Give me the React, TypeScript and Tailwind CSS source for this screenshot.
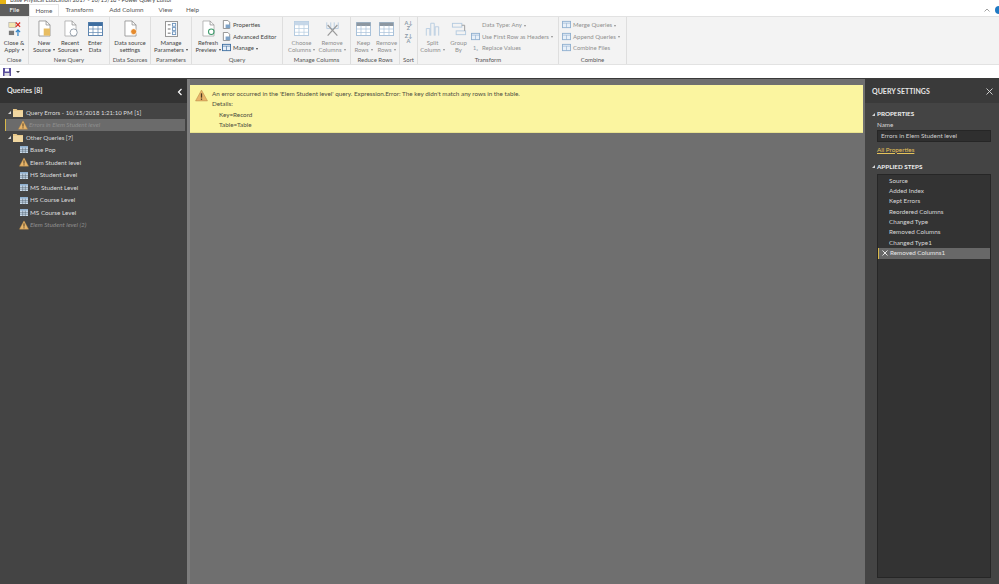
import React from "react";

const Doc = ({ badge, faded }: { badge?: React.ReactNode; faded?: boolean }) => (
  <svg width="19" height="19" viewBox="0 0 24 24" fill="none">
    <path d="M5 2.5h9l5 5v14H5z" fill="#fff" stroke={faded ? "#a9a9a9" : "#8d8d8d"} />
    <path d="M14 2.5v5h5" stroke="#8d8d8d" />
    {badge}
  </svg>
);

const Grid = ({ color = "#5f86b0", head = "#3e6ea0", w = 16, h = 16 }: { color?: string; head?: string; w?: number; h?: number }) => (
  <svg width={w} height={h} viewBox={`0 0 ${w} ${h}`} fill="none">
    <rect x="0.5" y="0.5" width={w - 1} height={h - 1} fill="#fff" stroke={color} />
    <rect x="0.5" y="0.5" width={w - 1} height={h / 4} fill={head} />
    <path d={`M${w / 3} ${h / 4}V${h}M${(2 * w) / 3} ${h / 4}V${h}M0 ${h / 2}H${w}M0 ${(3 * h) / 4}H${w}`} stroke={color} strokeWidth="0.7" />
  </svg>
);

const Caret = () => <span className="inline-block align-middle ml-[2px] w-0 h-0 border-x-[1.5px] border-x-transparent border-t-[2px] border-t-current" />;

const cap = (s: string) => (s.endsWith("▾") ? <>{s.slice(0, -2)}<Caret /></> : s);

const Btn = ({ icon, l1, l2, w, off }: { icon: React.ReactNode; l1: string; l2: string; w: number; off?: boolean }) => (
  <div className={`flex flex-col items-center shrink-0 ${off ? "text-[#8f8f8f]" : "text-[#444]"}`} style={{ width: w }}>
    <div className="h-[19px] flex items-center justify-center">{icon}</div>
    <div className="leading-[7px] h-[6.5px] mt-[1px] text-center whitespace-nowrap">{l1}</div>
    <div className="leading-[7px] h-[6.5px] text-center whitespace-nowrap">{cap(l2)}</div>
  </div>
);

const Group = ({ w, label, children }: { w: number; label: string; children: React.ReactNode }) => (
  <div className="flex flex-col h-full shrink-0 border-r border-[#dedede]" style={{ width: w }}>
    <div className="flex-1 flex items-start justify-center pt-[2px]">{children}</div>
    <div className="h-[8px] text-center text-[#555] leading-[7px] whitespace-nowrap">{label}</div>
  </div>
);

const Small = ({ icon, text, off }: { icon: React.ReactNode; text: string; off?: boolean }) => (
  <div className={`h-[11.6px] flex items-center gap-[2px] whitespace-nowrap ${off ? "text-[#8f8f8f]" : "text-[#444]"}`}>
    <span className="w-[9px] h-[10px] flex items-center justify-center shrink-0">{icon}</span>
    <span>{cap(text)}</span>
  </div>
);

const MiniIcon = ({ c = "#8fb0d0" }: { c?: string }) => (
  <svg width="9" height="9" viewBox="0 0 10 10" fill="none">
    <rect x="0.5" y="1.5" width="9" height="7" fill="#e8f0f8" stroke={c} />
    <path d="M0.5 3.5h9M5 3.5v5" stroke={c} strokeWidth="0.7" />
  </svg>
);

const Warn = ({ s = 11 }: { s?: number }) => (
  <svg width={s} height={s} viewBox="0 0 12 12">
    <path d="M6 1 11.5 11H.5z" fill="#e8b56a" stroke="#b98a45" strokeWidth="0.5" />
    <rect x="5.4" y="4" width="1.2" height="4" fill="#4a3a22" />
    <rect x="5.4" y="8.8" width="1.2" height="1.2" fill="#4a3a22" />
  </svg>
);

const Folder = () => (
  <svg width="10" height="9" viewBox="0 0 10 9">
    <path d="M0 1h3.5l1 1H10v7H0z" fill="#e9c98a" />
    <path d="M0 3h10v6H0z" fill="#f0d6a0" />
  </svg>
);

const TableSmall = () => (
  <svg width="8" height="7" viewBox="0 0 8 7">
    <rect width="8" height="7" fill="#c9dbec" />
    <rect width="8" height="1.6" fill="#8fb0d0" />
    <path d="M2.7 1.6V7M5.3 1.6V7M0 3.4h8M0 5.2h8" stroke="#4d5a68" strokeWidth="0.5" />
  </svg>
);

const Tri = () => <span className="w-0 h-0 border-l-[3px] border-l-transparent border-b-[3px] border-b-[#d5d5d5] shrink-0" />;

const Row = ({ kind, text, italic, selected }: { kind: "warn" | "table"; text: string; italic?: boolean; selected?: boolean }) => (
  <div className={`h-[12.55px] flex items-center whitespace-nowrap ${selected ? "bg-[#6b6b6b] border-l border-[#d8b84a] pl-[11px] mr-[2px] ml-[5px]" : "pl-[17px]"} ${italic ? "italic text-[#8e8e8e]" : "text-[#dcdcdc]"}`}>
    <span className={`w-[13px] flex justify-center shrink-0 ${selected ? "-ml-[1px]" : ""}`}>
      {kind === "warn" ? <Warn s={10} /> : <TableSmall />}
    </span>
    {text}
  </div>
);

const FolderRow = ({ text }: { text: string }) => (
  <div className="h-[12.55px] flex items-center gap-[2px] pl-[8px] text-[#dcdcdc] whitespace-nowrap text-[6.1px]">
    <Tri />
    <Folder />
    <span className="ml-[1px]">{text}</span>
  </div>
);

const steps = ["Source", "Added Index", "Kept Errors", "Reordered Columns", "Changed Type", "Removed Columns", "Changed Type1"];

export default function App() {
  return (
    <div className="w-[999px] h-[584px] overflow-hidden flex flex-col bg-white text-[6.3px]" style={{ fontFamily: 'Lato, "Open Sans", sans-serif' }}>
      {/* title bar, cropped */}
      <div className="h-[4px] overflow-hidden flex items-end gap-[4px] text-[#444] text-[5.8px] leading-[8px] shrink-0">
        <span className="w-[6px] h-[4px] bg-[#e7b416] shrink-0" />
        <span>Base Physical Education 2017 - 10/15/18 - Power Query Editor</span>
      </div>
      {/* tabs */}
      <div className="h-[12px] flex items-stretch text-[#555] shrink-0 overflow-hidden">
        <div className="w-[29px] bg-[#5e5e5e] text-white flex items-center justify-center">File</div>
        <div className="w-[30px] border-x border-t border-[#e5e5e5] flex items-center justify-center">Home</div>
        <div className="w-[41px] flex items-center justify-center">Transform</div>
        <div className="w-[51px] flex items-center justify-center ml-[1px]">Add Column</div>
        <div className="w-[27px] flex items-center justify-center">View</div>
        <div className="w-[27px] flex items-center justify-center">Help</div>
        <div className="flex-1 flex items-center justify-end gap-[5px] -mr-[4px]">
          <Chev />
          <span className="w-[8px] h-[8px] rounded-full bg-[#1f7ac4] shrink-0" />
        </div>
      </div>
      {/* ribbon */}
      <div className="h-[49px] bg-[#f3f3f3] border-y border-[#e2e2e2] flex shrink-0 text-[6px]">
        <Group w={29} label="Close">
          <Btn w={28} l1="Close &" l2="Apply ▾" icon={
            <svg width="13" height="16" viewBox="0 0 15 18" fill="none">
              <rect x="1" y="1.5" width="8" height="6" fill="#f4e7b0" stroke="#9c9c9c" strokeWidth="0.6" />
              <path d="M9 1.5l5 5M14 1.5l-5 5" stroke="#d93025" strokeWidth="1.4" />
              <rect x="1" y="11" width="6" height="5" fill="#777" />
              <path d="M11.5 17v-6.5M9 12.5l2.5-2.5 2.5 2.5" stroke="#2b7fc4" strokeWidth="1.3" />
            </svg>
          } />
        </Group>
        <Group w={81} label="New Query">
          <Btn w={26} l1="New" l2="Source ▾" icon={<Doc badge={<rect x="11" y="12" width="8" height="9" fill="#e8bd62" />} />} />
          <Btn w={26} l1="Recent" l2="Sources ▾" icon={<Doc faded badge={<circle cx="16" cy="17" r="4.5" fill="#fff" stroke="#7f8c99" />} />} />
          <Btn w={24} l1="Enter" l2="Data" icon={<Grid w={15} h={14} />} />
        </Group>
        <Group w={41} label="Data Sources">
          <Btn w={40} l1="Data source" l2="settings" icon={<Doc badge={<circle cx="16" cy="16" r="3.8" fill="#e58a2c" stroke="#fff" />} />} />
        </Group>
        <Group w={41} label="Parameters">
          <Btn w={40} l1="Manage" l2="Parameters ▾" icon={
            <svg width="13" height="16" viewBox="0 0 14 17" fill="none">
              <rect x="0.5" y="0.5" width="13" height="16" fill="#fff" stroke="#8d8d8d" />
              <path d="M3 4h3M3 8.5h3M3 13h3" stroke="#666" />
              <rect x="8" y="2.5" width="3.5" height="3" stroke="#6f95bd" />
              <rect x="8" y="7" width="3.5" height="3" stroke="#6f95bd" />
              <rect x="8" y="11.5" width="3.5" height="3" stroke="#6f95bd" />
            </svg>
          } />
        </Group>
        <Group w={91} label="Query">
          <div className="flex w-full pl-[3px]">
            <Btn w={26} l1="Refresh" l2="Preview ▾" icon={<Doc faded badge={<circle cx="15.5" cy="16" r="3.5" fill="none" stroke="#3c9a6a" strokeWidth="1.3" />} />} />
            <div className="ml-[1px] flex flex-col">
              <Small text="Properties" icon={<Doc2 />} />
              <Small text="Advanced Editor" icon={<Doc2 />} />
              <Small text="Manage ▾" icon={<MiniIcon c="#3e6ea0" />} />
            </div>
          </div>
        </Group>
        <Group w={68} label="Manage Columns">
          <Btn off w={31} l1="Choose" l2="Columns ▾" icon={<Grid w={15} h={15} color="#b5cbe0" head="#c6d7e8" />} />
          <Btn off w={30} l1="Remove" l2="Columns ▾" icon={
            <svg width="15" height="16" viewBox="0 0 17 17" fill="none">
              <path d="M2 1v7h13V1M6.5 1v7M10.5 1v7" stroke="#b5cbe0" />
              <path d="M3 4l11 12M14 4 3 16" stroke="#9a9a9a" strokeWidth="1.4" />
            </svg>
          } />
        </Group>
        <Group w={49} label="Reduce Rows">
          <Btn off w={23} l1="Keep" l2="Rows ▾" icon={<Grid w={15} h={14} color="#a9c2da" head="#8d97a1" />} />
          <Btn off w={23} l1="Remove" l2="Rows ▾" icon={<Grid w={15} h={14} color="#a9c2da" head="#8d97a1" />} />
        </Group>
        <Group w={18} label="Sort">
          <div className="h-[24px] flex flex-col items-center gap-[3px] pt-[2px] text-[#8a99a8] text-[5.5px] leading-[5px] font-bold">
            <span className="flex flex-col items-center"><span>A↓</span><span>Z</span></span>
            <span className="flex flex-col items-center"><span>Z↓</span><span>A</span></span>
          </div>
        </Group>
        <Group w={141} label="Transform">
          <div className="flex w-full pl-[1px]">
            <Btn off w={27} l1="Split" l2="Column ▾" icon={
              <svg width="15" height="16" viewBox="0 0 17 17" fill="none" stroke="#b5cbe0">
                <path d="M1.5 16V8h4v8M6.5 16V2h4v14M11.5 16V6h4v10" />
              </svg>
            } />
            <Btn off w={25} l1="Group" l2="By" icon={
              <svg width="16" height="16" viewBox="0 0 17 17" fill="none" stroke="#b5cbe0">
                <rect x="1.5" y="2.5" width="10" height="4" />
                <rect x="5.5" y="10.5" width="10" height="4" />
                <path d="M11.5 4.5h3v6" stroke="#9a9a9a" />
              </svg>
            } />
            <div className="flex flex-col">
              <Small off text="Data Type: Any ▾" icon={<span />} />
              <Small off text="Use First Row as Headers ▾" icon={<MiniIcon />} />
              <Small off text="Replace Values" icon={<span className="text-[5.5px] leading-[6px] text-[#8a99a8]">1₂</span>} />
            </div>
          </div>
        </Group>
        <Group w={68} label="Combine">
          <div className="flex flex-col w-full pl-[3px]">
            <Small off text="Merge Queries ▾" icon={<MiniIcon />} />
            <Small off text="Append Queries ▾" icon={<MiniIcon />} />
            <Small off text="Combine Files" icon={<MiniIcon />} />
          </div>
        </Group>
        <div className="flex-1" />
      </div>
      {/* quick access */}
      <div className="h-[13px] flex items-center gap-[5px] pl-[3px] shrink-0">
        <svg width="8" height="8" viewBox="0 0 8 8">
          <rect width="8" height="8" fill="#5a4f9c" />
          <rect x="2" y="0.5" width="4" height="3" fill="#fff" />
          <rect x="1.5" y="5" width="5" height="3" fill="#ddd" />
        </svg>
        <span className="w-0 h-0 border-x-[2px] border-x-transparent border-t-[2.5px] border-t-[#444]" />
      </div>
      {/* main */}
      <div className="flex-1 min-h-0 flex bg-[#6f6f6f] border-t border-[#3a3a3a]">
        {/* left */}
        <div className="w-[187px] flex flex-col bg-[#444444] shrink-0">
          <div className="h-[24px] bg-[#333333] flex items-center justify-between pl-[7px] pr-[4px] pt-[1px] text-[#e6e6e6] text-[7.2px] shrink-0">
            <span className="font-bold">Queries [8]</span>
            <svg width="6" height="8" viewBox="0 0 6 8" fill="none" stroke="#fff" strokeWidth="1.2"><path d="M4.5 1 1.5 4l3 3" /></svg>
          </div>
          <div className="pt-[3px]">
            <FolderRow text="Query Errors - 10/15/2018 1:21:10 PM [1]" />
            <Row kind="warn" text="Errors in Elem Student level" italic selected />
            <FolderRow text="Other Queries [7]" />
            <Row kind="table" text="Base Pop" />
            <Row kind="warn" text="Elem Student level" />
            <Row kind="table" text="HS Student Level" />
            <Row kind="table" text="MS Student Level" />
            <Row kind="table" text="HS Course Level" />
            <Row kind="table" text="MS Course Level" />
            <Row kind="warn" text="Elem Student level (2)" italic />
          </div>
        </div>
        {/* center */}
        <div className="flex-1 min-w-0 border-l-[3px] border-[#7d7d7d] pt-[6px] pr-[2px]">
          <div className="h-[48px] bg-[#fbf5a0] border-b border-[#e9e38f] flex items-start pl-[5px] pt-[4px] text-[#4d4d3f]">
            <span className="w-[17px] shrink-0"><Warn s={13} /></span>
            <div className="leading-[10.4px] whitespace-nowrap">
              <div className="h-[10.4px]">An error occurred in the 'Elem Student level' query. Expression.Error: The key didn't match any rows in the table.</div>
              <div className="h-[10.4px]">Details:</div>
              <div className="h-[10.4px] pl-[7px]">Key=Record</div>
              <div className="h-[10.4px] pl-[7px]">Table=Table</div>
            </div>
          </div>
        </div>
        {/* right */}
        <div className="w-[134px] flex flex-col bg-[#444444] shrink-0">
          <div className="h-[24px] bg-[#3a3a3a] flex items-center justify-between pl-[7px] pr-[6px] pt-[1px] text-[#e6e6e6] text-[7px] font-bold shrink-0">
            <span>QUERY SETTINGS</span>
            <svg width="7" height="7" viewBox="0 0 7 7" stroke="#ddd" strokeWidth="0.9"><path d="M.5.5l6 6M6.5.5l-6 6" /></svg>
          </div>
          <div className="flex-1 min-h-0 flex flex-col pl-[12px] pr-[8px] pb-[6px] text-[#d8d8d8]">
            <div className="flex items-center gap-[2px] -ml-[5px] h-[10px] mt-[6px] text-[#eee] font-bold"><Tri />PROPERTIES</div>
            <div className="h-[9px] leading-[9px] mt-[0.5px]">Name</div>
            <div className="h-[12px] mt-[1px] bg-[#2f2f2f] border border-[#262626] flex items-center pl-[3px] text-[#cfcfcf]">Errors in Elem Student level</div>
            <div className="h-[10px] mt-[3px] leading-[10px] text-[#e5c25a] underline">All Properties</div>
            <div className="flex items-center gap-[2px] -ml-[5px] h-[10px] mt-[7px] text-[#eee] font-bold"><Tri />APPLIED STEPS</div>
            <div className="flex-1 min-h-0 mt-[2px] bg-[#333333] border border-[#262626] pt-[1px]">
              {steps.map((s) => (
                <div key={s} className="h-[10.4px] leading-[10.4px] pl-[11px]">{s}</div>
              ))}
              <div className="h-[10.4px] leading-[10.4px] bg-[#686868] border-l border-[#d8b84a] flex items-center text-[#e6e6e6]">
                <svg className="mx-[2.5px]" width="6" height="6" viewBox="0 0 6 6" stroke="#e6e6e6" strokeWidth="1"><path d="M.5.5l5 5M5.5.5l-5 5" /></svg>
                Removed Columns1
              </div>
            </div>
          </div>
        </div>
      </div>
    </div>
  );
}

function Chev() {
  return (
    <svg width="6" height="4" viewBox="0 0 6 4" fill="none" stroke="#888" strokeWidth="0.8"><path d="M.5 3.5 3 1l2.5 2.5" /></svg>
  );
}

function Doc2() {
  return (
    <svg width="9" height="9" viewBox="0 0 10 10" fill="none">
      <path d="M1.5.5h5l2 2v7h-7z" fill="#fff" stroke="#8a8a8a" />
      <rect x="4" y="5" width="5" height="4" fill="#7fa3c7" />
    </svg>
  );
}
